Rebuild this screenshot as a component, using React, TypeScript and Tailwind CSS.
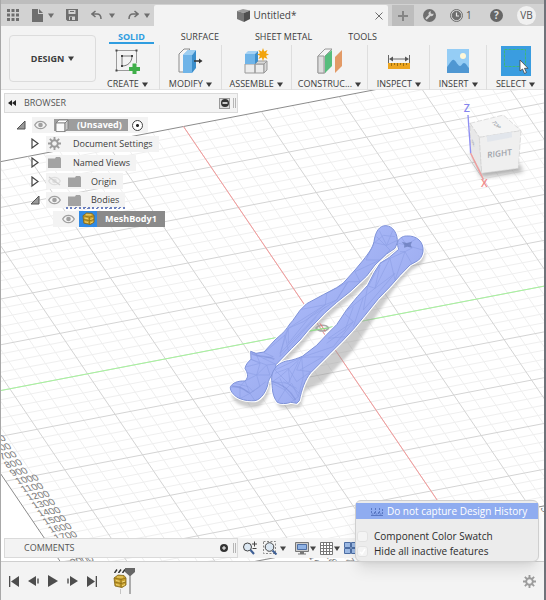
import { ReactNode } from "react";
import clsx from "clsx";

type TTool = {
  label: string;
  icon: ReactNode;
};

type TNode = {
  label: string;
  open?: boolean;
  hidden?: boolean;
  indent: string;
  toggle: boolean;
  eye: boolean;
  kind: "root" | "gear" | "folder" | "bodies" | "mesh";
};

const Caret = () => (
  <svg className="h-[5px] w-[6px] shrink-0" viewBox="0 0 6 5" fill="currentColor">
    <path d="M0 .5h6L3 5z" />
  </svg>
);

const CreateIcon = () => (
  <svg width="26" height="26" viewBox="0 0 26 26" fill="none">
    <path d="M3 2.500h20M2.500 3v20M3 22.500h12M22.500 3v12" stroke="#9a9a9a" />
    <path d="M8 8h10c0 6-4 10-10 10z" stroke="#777" />
    <g fill="#444">
      <path d="M1.500 1.500h2v2h-2zM21.500 1.500h2v2h-2zM1.500 21.500h2v2h-2zM7 7h2v2H7zM17 7h2v2h-2zM7 17h2v2H7z" />
    </g>
    <path d="M18.500 15.500h4v3.500H26v4h-3.500v3.500h-4V23H15v-4h3.500z" fill="#3fae49" />
  </svg>
);

const ModifyIcon = () => (
  <svg width="26" height="26" viewBox="0 0 26 26">
    <path d="M2 6l5-5h6l-5 5v18H2z" fill="#f5f5f5" stroke="#8b8b8b" />
    <path d="M6 7l5-5h8l-4 5v18H6z" fill="#6fb4e8" />
    <path d="M15 7l4-5v18l-4 5z" fill="#3b8ecb" />
    <path d="M6 7l5-5h8l-4 5z" fill="#9ccef2" />
    <path d="M17 13h6" stroke="#333" strokeWidth="1.500" />
    <path d="M22 10.500l3.500 2.500-3.500 2.500z" fill="#333" />
  </svg>
);

const AssembleIcon = () => (
  <svg width="26" height="26" viewBox="0 0 26 26">
    <path d="M2 16h10v9H2zM12 16h9v9h-9z" fill="#ececec" stroke="#999" />
    <path d="M12 16l3-3h9l-3 3zM21 16l3-3v9l-3 3z" fill="#d8d8d8" stroke="#999" />
    <path d="M2 6h10v10H2z" fill="#6fb4e8" />
    <path d="M2 6l3-3h10l-3 3z" fill="#a5d2f3" />
    <path d="M12 6l3-3v10l-3 3z" fill="#3b8ecb" />
    <path
      d="M20 0l1.200 3.600L24.500 2 23 5.200 26 6.500 23 7.800l1.500 3.200-3.300-1.600L20 13l-1.200-3.600L15.500 11 17 7.800 14 6.500l3-1.300L15.500 2l3.300 1.600z"
      fill="#f2a40d"
    />
  </svg>
);

const ConstructIcon = () => (
  <svg width="26" height="26" viewBox="0 0 26 26">
    <path d="M2 8l7-7h7l-7 7v17H2z" fill="#f5f5f5" stroke="#999" />
    <path d="M2 8h6v17H2z" fill="#dedede" stroke="#999" />
    <path d="M9 8l7-6v16l-7 7z" fill="#57bd7c" />
    <path d="M19 9l7-7v16l-7 7z" fill="#e39a66" />
  </svg>
);

const InspectIcon = () => (
  <svg width="24" height="26" viewBox="0 0 24 26">
    <path d="M1.500 7v8M22.500 7v8M4 11h16" stroke="#666" />
    <path d="M2 11l4-2.500v5zM22 11l-4-2.500v5z" fill="#555" />
    <path d="M1 15h22v6H1z" fill="#eda51f" />
    <path d="M4.500 15v3M7.500 15v2M10.500 15v3M13.500 15v2M16.500 15v3M19.500 15v2" stroke="#9b6f10" />
  </svg>
);

const InsertIcon = () => (
  <svg width="24" height="26" viewBox="0 0 24 26">
    <path d="M1 1h22v24H1z" fill="#95cdf5" />
    <path d="M1 19c4-5 5-8 7-7s4 6 6 6 2-3 4-3 3 3 5 5v5H1z" fill="#4f97d2" />
    <circle cx="17" cy="8" r="3" fill="#fff8d8" />
  </svg>
);

const SelectIcon = () => (
  <svg width="30" height="30" viewBox="0 0 30 30">
    <path d="M0 0h30v30H0z" fill="#3a9de0" />
    <path d="M3.500 3.500h21v17h-21z" fill="none" stroke="#3fb877" strokeDasharray="3 1" />
    <path d="M19 14v11l2.500-2 2 4.500 2-1-2-4.200h3.500z" fill="#fff" stroke="#444" strokeWidth=".8" />
  </svg>
);

const DocumentCube = () => (
  <svg width="13" height="13" viewBox="0 0 13 13">
    <path d="M0 2l6-2 7 1.500-6 2.500z" fill="#9c9c9c" />
    <path d="M0 2l7 2v9L0 10z" fill="#777" />
    <path d="M7 4l6-2.500V10l-6 3z" fill="#4f4f4f" />
  </svg>
);

const Eye = ({ off }: { off?: boolean }) => (
  <svg width="13" height="10" viewBox="0 0 13 10" className={off ? "text-[#dedede]" : "text-[#a0a0a0]"}>
    <path
      d="M.7 5C2 2.500 4 1.300 6.500 1.300S11 2.500 12.300 5C11 7.500 9 8.700 6.500 8.700S2 7.500.7 5z"
      fill="none"
      stroke="currentColor"
      strokeWidth="1.300"
    />
    <circle cx="6.500" cy="5" r="2.300" fill="currentColor" />
    {off && <path d="M1 1l11 8" stroke="#cfcfcf" strokeWidth="1.300" />}
  </svg>
);

const Gear = ({ size }: { size: number }) => (
  <svg width={size} height={size} viewBox="0 0 14 14" className="text-[#9c9c9c]">
    <g stroke="currentColor" strokeWidth="2">
      <path d="M7 0v14M0 7h14M2 2l10 10M12 2L2 12" />
    </g>
    <circle cx="7" cy="7" r="4.600" fill="currentColor" />
    <circle cx="7" cy="7" r="2.500" fill="#f3f3f3" />
  </svg>
);

const Folder = () => (
  <svg width="13" height="11" viewBox="0 0 13 11" fill="#a3a3a3">
    <path d="M0 1.500h7l1-1.500h4l1 1.500V11H0z" />
  </svg>
);

const RootCube = () => (
  <svg width="14" height="13" viewBox="0 0 14 13" stroke="#777" strokeWidth=".8">
    <path d="M1 4l3-3h9l-3 3z" fill="#fff" />
    <path d="M1 4h9v8.500H1z" fill="#fafafa" />
    <path d="M10 4l3-3v8.500l-3 3z" fill="#c9c9c9" />
  </svg>
);

const MeshIcon = ({ size }: { size: number }) => (
  <svg width={size} height={size} viewBox="0 0 14 14">
    <path d="M1 4l4-3 6 .5L13 4v7l-4 2.500-7-1.500z" fill="#c9a02c" stroke="#7d6318" strokeWidth=".8" />
    <path d="M1 4l7 1.500L13 4M8 5.500v8M1.500 8l6.500 1.500L13 8" fill="none" stroke="#8a6d1a" strokeWidth=".8" />
    <path d="M3 6.500l3.500.8M3 10.500l3.500.8M9 8l3-1M9 11.800l3-1.300M4 3h6" stroke="#f0d77a" />
  </svg>
);

const tools: TTool[] = [
  { label: "CREATE", icon: <CreateIcon /> },
  { label: "MODIFY", icon: <ModifyIcon /> },
  { label: "ASSEMBLE", icon: <AssembleIcon /> },
  { label: "CONSTRUC...", icon: <ConstructIcon /> },
  { label: "INSPECT", icon: <InspectIcon /> },
  { label: "INSERT", icon: <InsertIcon /> },
  { label: "SELECT", icon: <SelectIcon /> },
];

const tabs = ["SOLID", "SURFACE", "SHEET METAL", "TOOLS"];

const nodes: TNode[] = [
  { label: "(Unsaved)", open: true, indent: "pl-[7px]", toggle: true, eye: true, kind: "root" },
  { label: "Document Settings", indent: "pl-[21px]", toggle: true, eye: false, kind: "gear" },
  { label: "Named Views", indent: "pl-[21px]", toggle: true, eye: false, kind: "folder" },
  { label: "Origin", hidden: true, indent: "pl-[21px]", toggle: true, eye: true, kind: "folder" },
  { label: "Bodies", open: true, indent: "pl-[21px]", toggle: true, eye: true, kind: "bodies" },
  { label: "MeshBody1", indent: "pl-[49px]", toggle: false, eye: true, kind: "mesh" },
];

const TitleBar = () => (
  <div className="flex h-[26px] items-end border-t-4 border-[#bdbdbd] bg-[#d2d2d2] text-[#6e6e6e]">
    <div className="flex h-full w-[153px] items-center justify-between pr-1 pl-[6px]">
      <button aria-label="Data panel">
        <svg width="12" height="12" viewBox="0 0 12 12" fill="currentColor">
          <path d="M0 0h3v3H0zM4.500 0h3v3h-3zM9 0h3v3H9zM0 4.500h3v3H0zM4.500 4.500h3v3h-3zM9 4.500h3v3H9zM0 9h3v3H0zM4.500 9h3v3h-3zM9 9h3v3H9z" />
        </svg>
      </button>
      <button aria-label="File" className="flex items-center gap-[5px]">
        <svg width="11" height="13" viewBox="0 0 11 13" fill="currentColor">
          <path d="M0 0h6v5h5v8H0zM7 0l4 4H7z" />
        </svg>
        <Caret />
      </button>
      <button aria-label="Save">
        <svg width="12" height="12" viewBox="0 0 12 12" fill="currentColor" fillRule="evenodd">
          <path d="M0 0h12v12H1.500L0 10.500zM2.500 1v4h7V1zM3 7.500V11h6V7.500zM4 8h2v3H4z" />
          <path d="M4 2h4v1H4z" />
        </svg>
      </button>
      <button aria-label="Undo" className="flex items-center gap-[6px]">
        <svg width="12" height="10" viewBox="0 0 12 10" fill="none" stroke="currentColor" strokeWidth="1.500">
          <path d="M4.500 1L1 4l3.500 3M1 4h5c3 0 4 2 4 5" />
        </svg>
        <Caret />
      </button>
      <button aria-label="Redo" className="flex items-center gap-[5px]">
        <svg width="12" height="10" viewBox="0 0 12 10" fill="none" stroke="currentColor" strokeWidth="1.500">
          <path d="M7.500 1L11 4 7.500 7M11 4H6C3 4 2 6 2 9" />
        </svg>
        <Caret />
      </button>
    </div>
    <div className="flex h-[21px] flex-1 items-center rounded-t-xs bg-[#f3f3f3] pr-[5px] pl-1">
      <div className="flex flex-1 items-center justify-center gap-1 text-[10px] text-[#444]">
        <DocumentCube />
        Untitled*
      </div>
      <button aria-label="Close tab">
        <svg width="8" height="8" viewBox="0 0 8 8" stroke="currentColor">
          <path d="M.5.5l7 7M7.500.5l-7 7" />
        </svg>
      </button>
    </div>
    <button aria-label="New tab" className="ml-1 flex h-[21px] w-[22px] items-center justify-center bg-[#bdbdbd]">
      <svg width="10" height="10" viewBox="0 0 10 10" fill="#858585">
        <path d="M4 0h2v4h4v2H6v4H4V6H0V4h4z" />
      </svg>
    </button>
    <div className="flex h-full items-center gap-[14px] pr-2 pl-[9px]">
      <button aria-label="Extensions">
        <svg width="13" height="13" viewBox="0 0 13 13">
          <circle cx="6.500" cy="6.500" r="6.500" fill="currentColor" />
          <path d="M3 10l4-4" stroke="#d2d2d2" strokeWidth="2" />
          <path d="M10.500 4.500a2.500 2.500 0 1 1-2.500-2.300L7.500 4l1.500 1z" fill="#d2d2d2" />
        </svg>
      </button>
      <button className="flex w-[26px] items-center gap-[3px] text-[10px] text-[#555]">
        <svg width="13" height="13" viewBox="0 0 13 13" fill="none" stroke="#6e6e6e">
          <circle cx="6.500" cy="6.500" r="6" />
          <circle cx="6.500" cy="6.500" r="4.200" fill="#6e6e6e" />
          <path d="M6.500 3.500v3.500h2.500" stroke="#e6e6e6" strokeWidth="1.200" />
        </svg>
        1
      </button>
      <button
        aria-label="Help"
        className="flex size-[13px] items-center justify-center rounded-full bg-[#666] text-[10px] font-bold text-[#e0e0e0]"
      >
        ?
      </button>
      <button className="flex size-[19px] items-center justify-center rounded-full bg-[#f0f0f0] text-[10px] text-[#555]">
        VB
      </button>
    </div>
  </div>
);

const Ribbon = () => (
  <div className="flex h-16 border-b border-[#e2e2e2] bg-[#f3f3f3] pl-2 text-[9px] font-medium text-[#3c3c3c]">
    <button className="mt-[9px] flex h-[47px] w-[87px] items-center justify-center gap-1 rounded-sm border border-[#dcdcdc] font-bold">
      DESIGN
      <Caret />
    </button>
    <div className="flex min-w-0 flex-1 flex-col">
      <div className="flex h-[18px] gap-[18px] pl-[13px]">
        {tabs.map((tab, i) => (
          <button
            key={tab}
            className={clsx(
              "border-b-2 px-[9px] pt-1 whitespace-nowrap",
              i === 0 ? "border-[#2f9de0] font-bold text-[#2f9de0]" : "border-transparent"
            )}
          >
            {tab}
          </button>
        ))}
      </div>
      <div className="grid flex-1 grid-cols-[64fr_62fr_70fr_77fr_62fr_57fr_57fr] divide-x divide-[#dedede] pt-[1px] pb-[2px]">
        {tools.map((tool) => (
          <button key={tool.label} className="flex flex-col items-center whitespace-nowrap">
            <span className="flex h-8 items-center">{tool.icon}</span>
            <span className="flex items-center gap-[3px] pt-[1px] leading-3">
              {tool.label}
              <Caret />
            </span>
          </button>
        ))}
      </div>
    </div>
  </div>
);

// grid steps in units of one cell, measured from the world origin
const ORIGIN = { x: 321, y: 329 };
const CELL_X = { x: 15.56, y: -2.99 };
const CELL_Y = { x: 5.5, y: 8.1 };
const EXTENT = 24;

const toScreen = (u: number, v: number) => ({
  x: ORIGIN.x + CELL_X.x * u + CELL_Y.x * v,
  y: ORIGIN.y + CELL_X.y * u + CELL_Y.y * v,
});

const GridLine = ({ from, to, color }: { from: number[]; to: number[]; color: string }) => {
  const a = toScreen(from[0], from[1]);
  const b = toScreen(to[0], to[1]);
  return <line x1={a.x} y1={a.y} x2={b.x} y2={b.y} stroke={color} strokeWidth="1" />;
};

const Grid = () => {
  const minor: ReactNode[] = [];
  const major: ReactNode[] = [];

  for (let i = -25; i <= EXTENT; i++) {
    const isMajor = i % 5 === 0;
    const list = isMajor ? major : minor;
    const color = i === -25 ? "#8c8c8c" : isMajor ? "#d4d4d4" : "#efefef";
    list.push(<GridLine key={`h${i}`} from={[-23.8, i]} to={[25, i]} color={color} />);
    if (i > -24) {
      list.push(
        <GridLine key={`v${i}`} from={[i, -25]} to={[i, EXTENT]} color={isMajor ? "#d4d4d4" : "#efefef"} />
      );
    }
  }

  return (
    <g>
      {minor}
      {major}
      <GridLine from={[-23.8, -25]} to={[-23.8, EXTENT]} color="#8c8c8c" />
      <GridLine from={[-23.8, EXTENT]} to={[25, EXTENT]} color="#8c8c8c" />
      <GridLine from={[-23.8, 0]} to={[25, 0]} color="#a6f59c" />
      <GridLine from={[0, -25]} to={[0, EXTENT]} color="#f79a9a" />
    </g>
  );
};

const RulerLabels = () => (
  <g fontSize="10" fill="#777" fontFamily="Liberation Sans, sans-serif">
    {Array.from({ length: 16 }, (_, i) => i + 5).map((n) => {
      const p = toScreen(-23.8, n);
      return (
        <text key={n} transform={`matrix(1 -.19 .56 .83 ${p.x + 12} ${p.y + 3})`}>
          {n * 100}
        </text>
      );
    })}
    {[1900, 1800, 1700].map((n, i) => (
      <text key={n} transform={`matrix(.56 .83 -1 .19 ${308 + i * 17} ${556 - i})`}>
        {n}
      </text>
    ))}
    <text transform="matrix(.56 .83 -1 .19 540 508)">300</text>
  </g>
);

const ULNA =
  "M498 47C518 48 534 70 532 98L525 115L500 132L465 165L440 198L390 245L350 277L315 308L265 360L240 390L215 415L168 464C170 480 152 495 145 515C142 540 125 568 105 572C90 573 75 572 60 566C45 560 30 545 31 532C36 518 55 512 75 513C88 500 82 488 75 475C78 462 85 455 93 448L92 424L108 430L132 426L165 390L185 372C200 360 205 345 218 332L240 301L260 281L310 254L350 233L370 219L405 180L430 150C445 130 458 115 462 95C466 65 478 46 498 47Z";
const RADIUS =
  "M560 78C590 76 612 95 609 125C607 138 600 150 588 155L570 165L540 196L510 230L475 266L430 322L400 358L365 395L330 430L272 488C255 508 245 540 238 572L230 580L212 577C200 582 180 582 172 577C162 565 158 550 157 535C155 510 152 495 162 480C170 465 185 455 205 452C220 450 232 445 247 439L290 406L320 374L350 344L380 299L412 260L443 226L463 187L480 160C490 152 500 148 508 142L536 118C530 100 532 90 542 84C547 80 553 78 560 78Z";

const Bones = () => (
  <g transform="translate(220 210) scale(.33333)" strokeLinejoin="round">
    <g fill="#9a9a9a" opacity=".5" filter="url(#soft)">
      <path d={ULNA} transform="translate(4 20)" />
      <path d={RADIUS} transform="translate(6 14)" />
      <path d="M540 210L450 345L400 420L310 515L245 550L300 440L420 300Z" />
    </g>
    <path d="M288 354c8-10 30-12 38 0-8 12-30 12-38 0z" fill="none" stroke="#a9a9a9" strokeWidth="5" />
    <path d="M300 340l16 24" stroke="#e07070" strokeWidth="3" />
    <path d="M270 362l56-8" stroke="#8fe088" strokeWidth="3" />
    <path d={ULNA} fill="#fff" stroke="#fff" strokeWidth="9" />
    <path d={RADIUS} fill="#fff" stroke="#fff" strokeWidth="9" />
    <path d={ULNA} fill="url(#bone)" stroke="#7d92d8" strokeWidth="3" />
    <path d={RADIUS} fill="url(#bone)" stroke="#7d92d8" strokeWidth="3" />
    <g fill="none" stroke="#8094dc" strokeWidth="2" opacity=".6">
      <path d="M464 98L500 106L530 92M478 62L500 106L518 62M464 98L490 76L525 80M470 80L510 120L480 150M462 98L438 150L480 150L405 185L420 215L385 215L350 270L380 220" />
      <path d="M320 250L316 284L245 298M320 250L385 215M316 284L350 270M316 284L205 355L250 335L350 270M316 284L270 320L205 400L205 355L195 375L205 422M132 428L195 375L180 440M205 355L180 430L316 290M180 440L290 320" />
      <path d="M93 448L120 460L108 430M92 424L130 445L160 440L132 428M93 448L140 465L166 462L130 445M80 470L120 460L110 495L82 488M110 495L140 465L150 495L110 495L75 513L60 530L31 532M60 530L90 550L105 572M75 513L90 550L138 515M60 530L60 566M90 550L60 566M45 520L85 530L100 545M110 495L120 530L90 550" />
      <path d="M535 100L560 105L590 85M545 84L560 105L580 112L608 120M540 125L555 125L580 112M555 125L575 160M510 145L555 125L525 210L510 145M480 160L510 145L465 235L480 165L445 228L465 235L525 190L430 300L443 228M465 235L430 262L380 302M430 262L400 350" />
      <path d="M375 312L400 335L325 385L375 380M400 290L375 360L320 400M400 335L340 410L245 442L310 440L240 480M245 442L230 480L272 485M235 455L205 520L165 480L245 442L180 500L157 515L205 520L238 550M165 490L205 475L230 515L272 485M157 520L195 540L230 580M172 577L195 540L180 505M195 540L215 520L235 560L212 577M190 515L230 535M205 475L210 520M245 442L250 500L235 560" />
    </g>
    <path d="M545 95l15 4 16-4-4 10 4 8-14-3-10 3 1-9z" fill="#6577b5" opacity=".7" />
    <path d="M157 515c25 5 50 20 70 55" fill="none" stroke="#6d82cc" strokeWidth="4" opacity=".4" />
    <path d="M95 430c15 12 45 5 68 18M36 528c20 2 30 5 50 20" fill="none" stroke="#6d82cc" strokeWidth="5" opacity=".4" />
  </g>
);

const ViewCube = () => (
  <g transform="translate(440 90) scale(.33333)">
    <path d="M92 190L125 262L250 245L235 220Z" fill="#777" opacity=".6" filter="url(#cubeShadow)" />
    <path d="M90 100L190 75L243 122L118 142Z" fill="#f5f5f5" stroke="#cfcfcf" strokeWidth="2" strokeDasharray="16 5" />
    <path d="M90 100L118 142L125 250L92 190Z" fill="#e8e8e8" stroke="#cfcfcf" strokeWidth="2" strokeDasharray="16 5" />
    <path d="M118 142L243 122L235 235L125 250Z" fill="#efefef" stroke="#cfcfcf" strokeWidth="2" strokeDasharray="16 5" />
    <path d="M140 138L215 126L216 142L142 156Z" fill="#e2e6ec" />
    <g fill="#a0a4ab" fontFamily="Open Sans, sans-serif" fontWeight="600">
      <text transform="matrix(.99 -.13 0 1 142 204)" fontSize="25">
        RIGHT
      </text>
      <text transform="matrix(.55 .6 -1 .25 154 96)" fontSize="17">
        TOP
      </text>
      <text transform="matrix(.4 .7 0 1 95 158)" fontSize="17">
        FR
      </text>
    </g>
    <path d="M84 75L92 190" stroke="#8f8ff2" strokeWidth="4" />
    <path d="M92 190L130 268" stroke="#f29a9a" strokeWidth="4" />
    <g fontFamily="Open Sans, sans-serif" fontSize="32" fontWeight="600">
      <text x="71" y="67" fill="#8585ee">
        Z
      </text>
      <text x="123" y="292" fill="#f08a8a">
        X
      </text>
    </g>
  </g>
);

const Scene = () => (
  <svg
    className="absolute inset-0 size-full"
    viewBox="1 90 543 471"
    preserveAspectRatio="xMinYMin slice"
    role="img"
    aria-label="Mesh body of two forearm bones"
  >
    <defs>
      <filter id="soft">
        <feGaussianBlur stdDeviation="4" />
      </filter>
      <filter id="cubeShadow">
        <feGaussianBlur stdDeviation="8" />
      </filter>
      <linearGradient id="bone" x1="0.4" y1="0.4" x2="0.6" y2="0.6">
        <stop offset="0" stopColor="#a9b8f8" />
        <stop offset="1" stopColor="#9dadf0" />
      </linearGradient>
    </defs>
    <Grid />
    <RulerLabels />
    <Bones />
    <ViewCube />
  </svg>
);

const TreeNode = ({ node }: { node: TNode }) => {
  const selected = node.kind === "mesh";

  return (
    <li className={clsx("flex h-4 items-center", node.indent)}>
      {node.toggle && (
        <button aria-label={`Toggle ${node.label}`} className="mr-[2px] flex w-[19px] justify-center">
          {node.open ? (
            <svg width="10" height="10" viewBox="0 0 10 10">
              <path d="M9 1v8H1z" fill="#999" stroke="#555" />
            </svg>
          ) : (
            <svg width="8" height="11" viewBox="0 0 8 11">
              <path d="M1 1v9l6-4.500z" fill="#fff" stroke="#444" strokeWidth="1.200" />
            </svg>
          )}
        </button>
      )}
      <div className="relative flex h-4 items-center bg-[#f3f3f3]">
        {node.eye && (
          <button
            aria-label={`Show or hide ${node.label}`}
            className={selected ? "pr-1 pl-[9px]" : "pr-[7px] pl-[2px]"}
          >
            <Eye off={node.hidden} />
          </button>
        )}
        {node.kind === "root" && (
          <>
            <span className="flex h-3 items-center gap-2 bg-[#9d9d9d] pr-[6px] pl-[1px] font-bold text-white">
              <RootCube />
              {node.label}
            </span>
            <input
              type="radio"
              aria-label="Activate component"
              defaultChecked
              className="mr-[5px] ml-1 size-[11px] appearance-none rounded-full border border-[#444] bg-[radial-gradient(#222_1px,#fff_2px)]"
            />
          </>
        )}
        {node.kind === "mesh" && (
          <span className="flex h-4 items-center bg-[#8a8a8a] pr-2 font-bold text-white">
            <span className="mr-2 flex h-4 w-[18px] items-center justify-center bg-[#2f8ae6]">
              <MeshIcon size={13} />
            </span>
            {node.label}
          </span>
        )}
        {node.kind !== "root" && node.kind !== "mesh" && (
          <span className={clsx("flex items-center pr-[6px] text-[#3c3c3c]", node.eye ? "gap-[10px]" : "gap-3 pl-[2px]")}>
            {node.kind === "gear" ? <Gear size={13} /> : <Folder />}
            {node.label}
          </span>
        )}
        {node.kind === "bodies" && (
          <span className="absolute right-0 -bottom-px left-5 h-[2px] bg-[repeating-linear-gradient(115deg,#6b80c0_0_2px,transparent_2px_4px)]" />
        )}
      </div>
    </li>
  );
};

const PanelGrip = () => (
  <span className="h-[10px] w-[3px] border-x border-[#b5b5b5]" />
);

const BrowserPanel = () => (
  <section className="relative mt-[3px] ml-[3px] w-[234px]">
    <header className="flex h-5 items-center border border-[#dadada] bg-[#f3f3f3] pr-[1px] pl-[3px] text-[9px] text-[#555]">
      <button aria-label="Collapse browser" className="mr-2">
        <svg width="8" height="6" viewBox="0 0 8 6" fill="#222">
          <path d="M4 0v6L0 3zM8 0v6L4 3z" />
        </svg>
      </button>
      <h2 className="flex-1">BROWSER</h2>
      <button aria-label="Minimize" className="mr-[3px] flex size-[11px] items-center justify-center border border-[#999] bg-[#ddd]">
        <svg width="8" height="8" viewBox="0 0 8 8">
          <circle cx="4" cy="4" r="4" fill="#333" />
          <path d="M1.500 4h5" stroke="#fff" strokeWidth="1.500" />
        </svg>
      </button>
      <PanelGrip />
    </header>
    <ul className="mt-1 flex h-[110px] flex-col justify-between text-[9px] font-medium whitespace-nowrap">
      {nodes.map((node) => (
        <TreeNode key={node.label} node={node} />
      ))}
    </ul>
  </section>
);

const CommentsBar = () => (
  <div className="relative mb-[3px] ml-[3px] flex h-5">
    <div className="flex w-[234px] items-center border border-[#dadada] bg-[#f3f3f3] pr-[1px] pl-[19px] text-[9px] text-[#555]">
      <h2 className="flex-1">COMMENTS</h2>
      <button aria-label="Add comment" className="mr-[5px]">
        <svg width="8" height="8" viewBox="0 0 8 8">
          <circle cx="4" cy="4" r="4" fill="#333" />
          <path d="M2 4h4M4 2v4" stroke="#fff" />
        </svg>
      </button>
      <PanelGrip />
    </div>
    <div className="flex items-center bg-[#f3f3f3] pr-12 pl-1 text-[#444]">
      <button aria-label="Zoom" className="mr-[6px]">
        <svg width="15" height="14" viewBox="0 0 15 14" fill="none" stroke="#444">
          <circle cx="5.500" cy="6" r="4" fill="#dbe7f2" />
          <path d="M8.500 9l3.500 4" stroke="#3d5e94" strokeWidth="2" />
          <path d="M10 3h5M12.500.5v5M10.500 7.500h4" />
        </svg>
      </button>
      <button aria-label="Fit" className="mr-[9px] flex items-center gap-[2px]">
        <svg width="15" height="14" viewBox="0 0 15 14" fill="none" stroke="#444">
          <path d="M.5.5h12v12H.5z" stroke="#888" strokeDasharray="2 1.500" />
          <circle cx="6.500" cy="6" r="4.300" fill="#dbe7f2" />
          <path d="M9.500 9.500l4 4" stroke="#3d5e94" strokeWidth="2" />
        </svg>
        <Caret />
      </button>
      <button aria-label="Display settings" className="mr-1 flex items-center gap-[1px]">
        <svg width="14" height="13" viewBox="0 0 14 13">
          <path d="M.5.5h13v9H.5z" fill="#ccc" stroke="#777" />
          <path d="M2.500 2.500h9v5h-9z" fill="#8fb2e4" stroke="#4d6ea4" />
          <path d="M5 10h4v1.500h2v1H3v-1h2z" fill="#777" />
        </svg>
        <Caret />
      </button>
      <button aria-label="Grid and snaps" className="mr-1 flex items-center gap-[1px]">
        <svg width="13" height="13" viewBox="0 0 13 13" stroke="#777" fill="#fff">
          <path d="M.5.5h12v12H.5zM3.500.5v12M6.500.5v12M9.500.5v12M.5 3.500h12M.5 6.500h12M.5 9.500h12" />
        </svg>
        <Caret />
      </button>
      <button aria-label="Viewports">
        <svg width="14" height="12" viewBox="0 0 14 12" stroke="#4d6ea4" fill="#9dbae4">
          <path d="M.5.5h6v5h-6zM7.500.5h6v5h-6zM.5 6.500h6v5h-6zM7.500 6.500h6v5h-6z" />
        </svg>
      </button>
    </div>
  </div>
);

const CheckRow = ({ id, label, checked }: { id: string; label: string; checked?: boolean }) => (
  <div className="flex h-[15px] items-center gap-[6px] pl-[1px]">
    <span className="relative flex">
      <input
        id={id}
        type="checkbox"
        defaultChecked={checked}
        className="size-[11px] appearance-none rounded-[3px] border border-[#e2e2e2] bg-[#f4f4f4]"
      />
      {checked && (
        <svg className="pointer-events-none absolute inset-[2px]" width="7" height="7" viewBox="0 0 7 7" fill="none" stroke="#fff" strokeWidth="1.500">
          <path d="M1 4l2 2 3-5" />
        </svg>
      )}
    </span>
    <label htmlFor={id}>{label}</label>
  </div>
);

const HistoryMenu = () => (
  <div className="absolute right-[5px] -bottom-px z-10 w-[184px] rounded-md border border-[#cfcfcf] bg-[#ececec] pt-[2px] pb-[2px] text-[10px] font-medium whitespace-nowrap text-[#2b2b2b] shadow-lg">
    <button className="mb-[10px] flex h-4 w-full items-center gap-1 bg-[#8facf0] pl-[15px] text-white">
      <svg width="12" height="9" viewBox="0 0 12 9" fill="none" stroke="#5a78c4">
        <path d="M.5 1v6h3V5M4.500 1v6h3V5M8.500 1v6h3V1" strokeDasharray="2 1" />
        <path d="M0 8.500h12" />
      </svg>
      Do not capture Design History
    </button>
    <CheckRow id="swatch" label="Component Color Swatch" />
    <CheckRow id="inactive" label="Hide all inactive features" checked />
  </div>
);

const Timeline = () => (
  <footer className="flex h-[39px] items-center border-t border-[#cfcfcf] bg-[#f3f3f3] pr-2 pl-2 text-[#4d4d4d]">
    <div className="flex items-center gap-[9px]">
      <button aria-label="Go to start">
        <svg width="10" height="11" viewBox="0 0 10 11" fill="currentColor">
          <path d="M0 0h1.300v11H0zM10 0v11L2 5.500z" />
        </svg>
      </button>
      <button aria-label="Step back">
        <svg width="11" height="10" viewBox="0 0 11 10" fill="currentColor">
          <path d="M8 0v10L0 5zM9.300 2.500h1.400v5H9.300z" />
        </svg>
      </button>
      <button aria-label="Play">
        <svg width="10" height="12" viewBox="0 0 10 12" fill="currentColor">
          <path d="M0 0l10 6-10 6z" />
        </svg>
      </button>
      <button aria-label="Step forward">
        <svg width="11" height="10" viewBox="0 0 11 10" fill="currentColor">
          <path d="M3 0l8 5-8 5zM.3 2.500h1.400v5H.3z" />
        </svg>
      </button>
      <button aria-label="Go to end">
        <svg width="10" height="11" viewBox="0 0 10 11" fill="currentColor">
          <path d="M8.700 0H10v11H8.700zM0 0l8 5.500L0 11z" />
        </svg>
      </button>
    </div>
    <div className="ml-4 flex items-center">
      <button aria-label="MeshBody1 feature" className="flex flex-col items-center gap-px">
        <svg width="12" height="4" viewBox="0 0 12 4" stroke="#333" strokeWidth="1.500">
          <path d="M.5 4L3 .5M4.500 4L7 .5M8.500 4L11 .5" />
        </svg>
        <MeshIcon size={14} />
        <span className="h-[5px] w-px bg-[#c4c4c4]" />
      </button>
      <svg className="-ml-[2px]" width="10" height="26" viewBox="0 0 10 26" fill="#666">
        <path d="M0 0h10v4L5.500 8v18h-1V8L0 4z" />
      </svg>
    </div>
    <button aria-label="Timeline settings" className="ml-auto">
      <Gear size={13} />
    </button>
  </footer>
);

const App = () => {
  return (
    <div className="flex min-h-screen flex-col border-r-2 border-l border-r-[#70737a] border-l-[#a8a8a8] bg-white font-['Open_Sans',sans-serif]">
      <TitleBar />
      <Ribbon />
      <main className="relative flex flex-1 flex-col justify-between">
        <Scene />
        <BrowserPanel />
        <CommentsBar />
        <HistoryMenu />
      </main>
      <Timeline />
    </div>
  );
};

export default App;
